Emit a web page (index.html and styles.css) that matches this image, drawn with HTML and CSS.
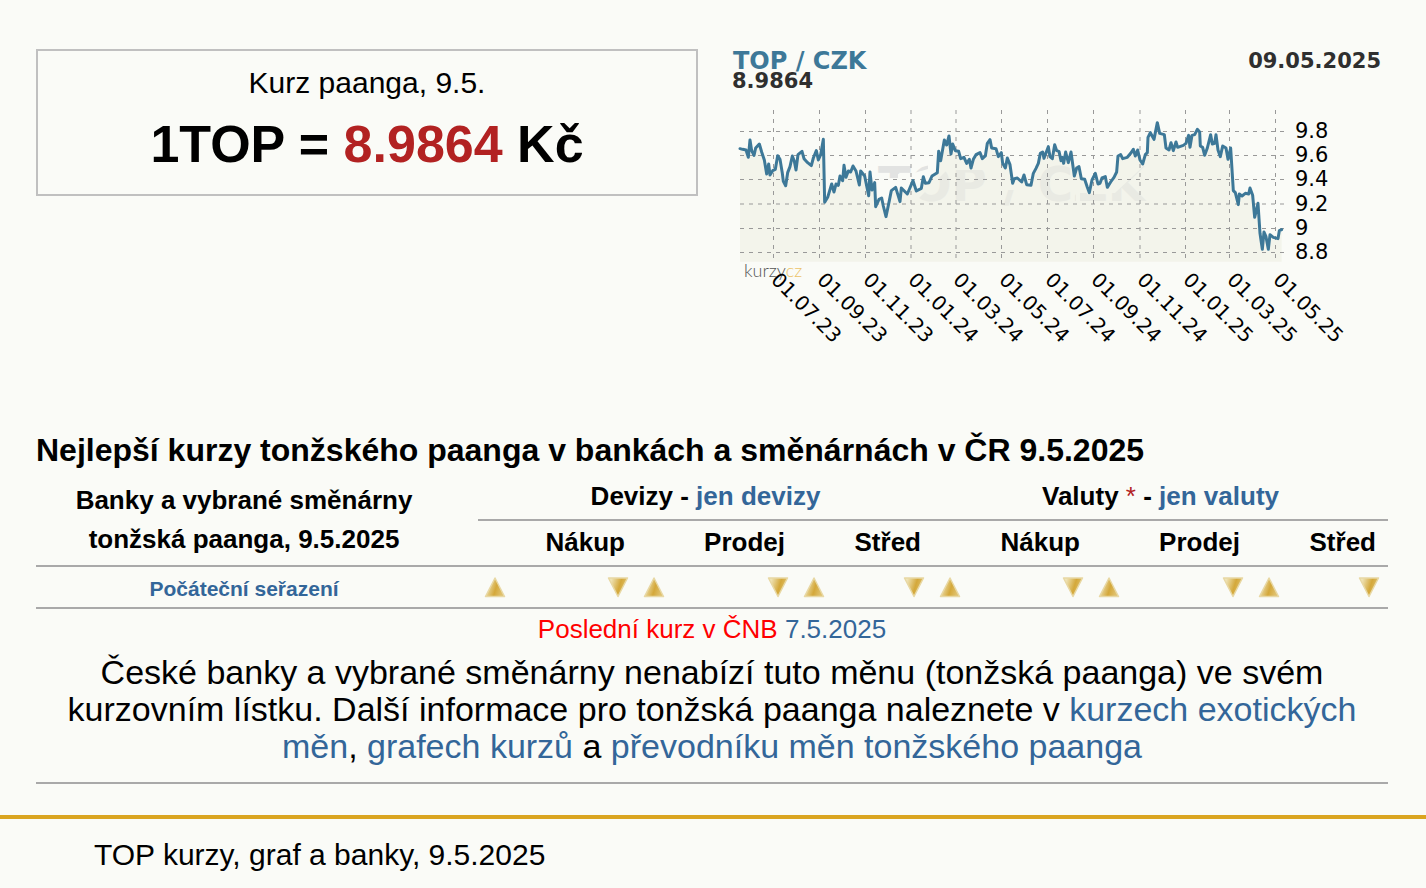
FILE: index.html
```html
<!DOCTYPE html>
<html lang="cs">
<head>
    <meta charset="UTF-8">
    <meta name="viewport" content="width=device-width, initial-scale=1.0">
    <title>TOP kurzy, graf a banky, 9.5.2025</title>
    <link rel="stylesheet" href="styles.css">
</head>
<body>
    <!-- sort arrows -->
    <svg class="defs" width="0" height="0" aria-hidden="true">
        <defs>
            <linearGradient id="gold" x1="0" y1="0" x2="1" y2="0.3">
                <stop offset="0.15" stop-color="#efe4b8"/>
                <stop offset="0.65" stop-color="#d4a83a"/>
                <stop offset="1" stop-color="#dfc06c"/>
            </linearGradient>
            <symbol id="up" viewBox="0 0 22 22">
                <path d="M11 2 L20.5 20.5 H1.5 Z" fill="url(#gold)" stroke="#e8d8a4" stroke-width="1.5" stroke-linejoin="round"/>
            </symbol>
            <symbol id="down" viewBox="0 0 22 22">
                <path d="M11 20.5 L20.5 2 H1.5 Z" fill="url(#gold)" stroke="#e8d8a4" stroke-width="1.5" stroke-linejoin="round"/>
            </symbol>
        </defs>
    </svg>

    <main>
        <div class="top">
            <div class="rate">
                <div class="rate-title">Kurz paanga, 9.5.</div>
                <div class="rate-value">1TOP = <span>8.9864</span> Kč</div>
            </div>

            <svg class="graph" viewBox="-4 9 662 311" role="img" aria-label="Graf TOP / CZK">
                <clipPath id="wm-top">
                    <path d="M146 120 H182 V134 H168 V138 H156 V134 H146 Z M184 120 H198 V129 L184 133 Z"/>
                </clipPath>
                <clipPath id="wm-bottom">
                    <path d="M182 165 L217 130 H262 V165 Z M262 150 H300 V175 H262 Z M300 120 H346 V165 H300 Z M350 153 H385 L420 120 V165 H350 Z"/>
                </clipPath>
                <g transform="scale(0.33333)">
                    <polygon id="area" class="area"/>
                </g>
                <text class="watermark above" x="148" y="161" clip-path="url(#wm-top)">TOP / CZK</text>
                <text class="watermark" x="148" y="161" clip-path="url(#wm-bottom)">TOP / CZK</text>
                <path class="grid" d="M10 91.5H557 M10 115.5H557 M10 139.5H557 M10 164H557 M10 188.5H557 M10 212.5H557"/>
                <path class="grid" d="M43.5 70V222 M89.5 70V222 M135.5 70V222 M181 70V222 M226 70V222 M271.5 70V222 M317.5 70V222 M363.5 70V222 M410 70V222 M455.5 70V222 M499.5 70V222 M545.5 70V222"/>
                <g transform="scale(0.33333)">
                    <polyline id="line" class="line" points="30,326 38,328 48,330 55,352 60,300 65,332 72,346 77,324 88,312 95,336 103,360 110,402 116,372 120,405 128,392 136,388 143,347 150,358 157,400 160,424 167,437 173,398 180,380 187,348 193,364 198,390 204,344 216,334 222,356 233,368 244,377 250,354 259,332 265,360 272,344 280,298 284,487 293,472 299,452 305,432 312,456 318,432 325,436 330,408 338,422 342,376 348,412 355,393 362,396 369,378 378,393 388,435 392,393 404,408 416,467 420,396 426,450 434,428 437,500 447,478 455,474 460,498 468,530 478,482 484,452 497,442 510,485 514,444 532,462 549,422 559,453 574,445 580,410 586,430 597,428 606,408 622,398 626,334 632,362 643,300 650,315 657,288 663,342 668,312 676,332 686,334 692,356 702,352 710,370 718,358 723,384 730,358 738,344 750,338 757,356 766,348 772,310 780,299 785,324 798,326 805,350 814,338 818,370 826,384 832,354 840,374 848,430 853,416 862,414 875,426 882,405 890,434 903,436 910,400 918,385 925,370 931,340 938,336 942,355 955,320 960,350 967,356 974,314 980,332 987,334 993,362 997,352 1001,370 1007,336 1015,368 1023,336 1033,408 1040,384 1047,380 1054,416 1064,418 1072,442 1078,458 1086,420 1096,400 1104,432 1110,430 1116,414 1126,410 1132,442 1142,426 1152,412 1160,396 1164,348 1172,344 1178,356 1192,352 1202,340 1210,328 1216,348 1223,330 1230,360 1238,372 1246,344 1252,338 1254,292 1261,278 1272,298 1282,248 1289,280 1303,284 1308,324 1317,330 1323,308 1330,332 1338,306 1343,322 1360,316 1368,310 1376,286 1380,322 1386,286 1394,284 1402,268 1409,276 1411,318 1418,322 1424,346 1432,324 1442,284 1447,312 1454,310 1458,284 1464,330 1471,350 1478,318 1488,324 1494,358 1502,324 1510,452 1516,458 1525,494 1528,462 1536,468 1546,460 1556,462 1560,444 1568,466 1574,532 1584,490 1590,580 1597,628 1602,576 1608,590 1615,628 1620,584 1630,592 1644,596 1648,572 1655,569"/>
                </g>
                <text class="graph-name" x="3" y="29">TOP / CZK</text>
                <text class="graph-bold" x="2" y="48">8.9864</text>
                <text class="graph-bold" x="651" y="28" text-anchor="end">09.05.2025</text>
                <text class="graph-logo" x="14" y="237">kurzy<tspan>cz</tspan></text>
                <g class="graph-value">
                    <text x="565" y="98">9.8</text>
                    <text x="565" y="122">9.6</text>
                    <text x="565" y="146">9.4</text>
                    <text x="565" y="171">9.2</text>
                    <text x="565" y="195">9</text>
                    <text x="565" y="219">8.8</text>
                </g>
                <g class="graph-date">
                    <text transform="translate(40 241) rotate(45)">01.07.23</text>
                    <text transform="translate(86 241) rotate(45)">01.09.23</text>
                    <text transform="translate(132 241) rotate(45)">01.11.23</text>
                    <text transform="translate(177 241) rotate(45)">01.01.24</text>
                    <text transform="translate(222 241) rotate(45)">01.03.24</text>
                    <text transform="translate(268 241) rotate(45)">01.05.24</text>
                    <text transform="translate(314 241) rotate(45)">01.07.24</text>
                    <text transform="translate(360 241) rotate(45)">01.09.24</text>
                    <text transform="translate(406 241) rotate(45)">01.11.24</text>
                    <text transform="translate(452 241) rotate(45)">01.01.25</text>
                    <text transform="translate(496 241) rotate(45)">01.03.25</text>
                    <text transform="translate(542 241) rotate(45)">01.05.25</text>
                </g>
            </svg>
        </div>

        <h2>Nejlepší kurzy tonžského paanga v bankách a směnárnách v ČR 9.5.2025</h2>

        <table>
            <colgroup>
                <col>
                <col class="buy"><col class="sell"><col class="mid">
                <col class="buy"><col class="sell"><col class="mid">
            </colgroup>
            <thead>
                <tr class="groups">
                    <th class="banks" rowspan="2">Banky a vybrané směnárny<br>tonžská paanga, 9.5.2025</th>
                    <th colspan="3">Devizy - <a href="#">jen devizy</a></th>
                    <th colspan="3">Valuty <span class="star">*</span> - <a href="#">jen valuty</a></th>
                </tr>
                <tr class="kinds">
                    <th>Nákup</th>
                    <th>Prodej</th>
                    <th>Střed</th>
                    <th>Nákup</th>
                    <th>Prodej</th>
                    <th>Střed</th>
                </tr>
                <tr class="sort">
                    <th><a href="#">Počáteční seřazení</a></th>
                    <td><div><a href="#" aria-label="Vzestupně"><svg><use href="#up"/></svg></a><a href="#" aria-label="Sestupně"><svg><use href="#down"/></svg></a></div></td>
                    <td><div><a href="#" aria-label="Vzestupně"><svg><use href="#up"/></svg></a><a href="#" aria-label="Sestupně"><svg><use href="#down"/></svg></a></div></td>
                    <td><div><a href="#" aria-label="Vzestupně"><svg><use href="#up"/></svg></a><a href="#" aria-label="Sestupně"><svg><use href="#down"/></svg></a></div></td>
                    <td><div><a href="#" aria-label="Vzestupně"><svg><use href="#up"/></svg></a><a href="#" aria-label="Sestupně"><svg><use href="#down"/></svg></a></div></td>
                    <td><div><a href="#" aria-label="Vzestupně"><svg><use href="#up"/></svg></a><a href="#" aria-label="Sestupně"><svg><use href="#down"/></svg></a></div></td>
                    <td><div><a href="#" aria-label="Vzestupně"><svg><use href="#up"/></svg></a><a href="#" aria-label="Sestupně"><svg><use href="#down"/></svg></a></div></td>
                </tr>
            </thead>
            <tbody>
                <tr>
                    <td class="note" colspan="7">
                        <span class="last">Poslední kurz v ČNB</span> <a href="#">7.5.2025</a>
                        <p>České banky a vybrané směnárny nenabízí tuto měnu (tonžská paanga) ve svém kurzovním lístku. Další informace pro tonžská paanga naleznete v <a href="#">kurzech exotických měn</a>, <a href="#">grafech kurzů</a> a <a href="#">převodníku měn tonžského paanga</a></p>
                    </td>
                </tr>
            </tbody>
        </table>
    </main>

    <footer>TOP kurzy, graf a banky, 9.5.2025</footer>

    <script>
        // the filled area follows the line down to the bottom of the graph
        const points = document.getElementById('line').getAttribute('points');
        document.getElementById('area').setAttribute('points', points + ' 1655,665 30,665');
    </script>
</body>
</html>
```

FILE: styles.css
```css
body {
    margin: 0;
    background-color: #fafbf7;
    color: #000;
    font-family: Arial, "Liberation Sans", sans-serif;
    font-size: 30px;
    line-height: 37px;
}

a {
    color: #336699;
    text-decoration: none;
}

.defs {
    position: absolute;
}

main {
    padding: 49px 38px 0 36px;
}

.top {
    display: grid;
    grid-template-columns: 1fr 1fr;
    gap: 28px;
    align-items: start;
    margin-bottom: 72px;
}

.rate {
    border: 2px solid #c0c0c0;
    padding: 13px 0 20px;
    text-align: center;
}

.rate-value {
    margin-top: 13px;
    font-size: 52px;
    font-weight: bold;
    line-height: 60px;
}

.rate-value span {
    color: #b22222;
}

/* graph */
.graph {
    display: block;
    width: 100%;
    overflow: visible;
    font-family: Verdana, "DejaVu Sans", sans-serif;
}

.area {
    fill: #f3f4eb;
}

.line {
    fill: none;
    stroke: #3d7898;
    stroke-width: 9;
    stroke-linejoin: round;
    stroke-linecap: round;
}

.grid {
    fill: none;
    stroke: #999;
    stroke-dasharray: 4 5;
}

.watermark {
    font-size: 48px;
    font-weight: bold;
    fill: #e9eae3;
}

.watermark.above {
    fill: #e2e3e2;
}

.graph-name {
    font-size: 24px;
    font-weight: bold;
    fill: #3d7898;
}

.graph-bold {
    font-size: 21px;
    font-weight: bold;
    fill: #2f2f2f;
}

.graph-value {
    font-size: 21px;
}

.graph-date {
    font-size: 20px;
}

.graph-logo {
    font-family: Lato, sans-serif;
    font-size: 18px;
    font-weight: 300;
    fill: #555;
}

.graph-logo tspan {
    fill: #ecc368;
}

/* rates table */
h2 {
    margin: 0 0 4px;
    font-size: 32px;
    line-height: 37px;
}

table {
    width: 100%;
    table-layout: fixed;
    border-collapse: separate;
    border-spacing: 0;
    font-size: 26px;
    line-height: 39px;
}

.buy {
    width: 159px;
}

.sell {
    width: 160px;
}

.mid {
    width: 136px;
}

th,
td {
    padding: 0;
    border-bottom: 2px solid #a9a9a9;
}

.groups th {
    padding: 4px 0 3px;
}

.groups .banks,
.sort th {
    padding: 2px 26px 0 0;
}

.kinds th {
    padding: 2px 12px 3px 0;
    text-align: right;
}

.star {
    color: #b22222;
    font-weight: normal;
}

.sort th {
    height: 38px;
    font-size: 21px;
    line-height: 37px;
}

.sort div {
    display: flex;
    justify-content: space-between;
    padding: 0 8px 0 6px;
}

.sort svg {
    display: block;
    width: 22px;
    height: 22px;
}

.note {
    padding-top: 1px;
    text-align: center;
}

.note p {
    margin: 5px 0 17px;
    font-size: 34px;
    line-height: 37px;
}

.last {
    color: #f00;
}

footer {
    margin-top: 31px;
    border-top: 4px solid #daa520;
    padding: 17px 94px 14px;
}
```
